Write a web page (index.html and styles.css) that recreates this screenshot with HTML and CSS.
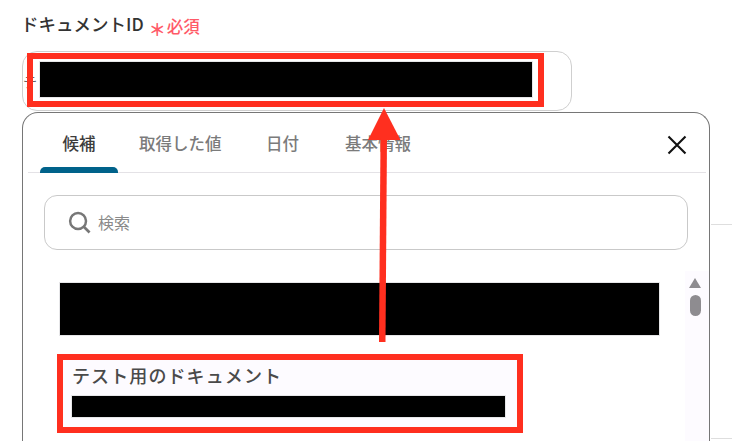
FILE: index.html
```html
<!DOCTYPE html>
<html lang="ja">
<head>
<meta charset="utf-8">
<title>ドキュメントID</title>
<link rel="stylesheet" href="styles.css">
</head>
<body>
<div class="page">
  <div class="field-label">
    <span class="label-text">ドキュメントID</span>
    <span class="required"><span class="asterisk">＊</span>必須</span>
  </div>
  <div class="id-input"><span class="input-value">テト</span></div>
  <div class="side-rule side-rule-top"></div>
  <div class="side-rule side-rule-bottom"></div>
  <section class="panel">
    <div class="tabs">
      <span class="tab tab-active">候補</span>
      <span class="tab tab-2">取得した値</span>
      <span class="tab tab-3">日付</span>
      <span class="tab tab-4">基本情報</span>
      <svg class="close" width="22" height="22" viewBox="0 0 22 22" aria-hidden="true"><path d="M2.5 2.5 19.5 19.5M19.5 2.5 2.5 19.5" stroke="#111" stroke-width="2.1" fill="none"/></svg>
    </div>
    <div class="search">
      <svg class="search-icon" width="23" height="23" viewBox="0 0 24 24" aria-hidden="true"><circle cx="10.5" cy="10.500" r="8.300" fill="none" stroke="#777" stroke-width="2.600"/><path d="M16.500 16.500 22.500 22.500" stroke="#777" stroke-width="2.800" fill="none"/></svg>
      <span class="search-text">検索</span>
    </div>
    <div class="list">
      <div class="option-first"><div class="redact redact-first"></div></div>
      <div class="option-hover">
        <div class="option-title">テスト用のドキュメント</div>
        <div class="redact redact-id"></div>
      </div>
    </div>
    <div class="scroll">
      <span class="scroll-up"></span>
      <span class="scroll-thumb"></span>
    </div>
  </section>
</div>
<div class="mark mark-input"></div>
<div class="redact-input"></div>
<div class="mark mark-option"></div>
<svg class="arrow" width="732" height="441" viewBox="0 0 732 441" aria-hidden="true">
  <path d="M384 108 400.500 140 368 140Z" fill="#ff2f1f"/>
  <path d="M380.500 138 387 138 385.500 342 379 342Z" fill="#ff2f1f"/>
</svg>
</body>
</html>
```

FILE: styles.css
```css
* { box-sizing: border-box; }
html, body { margin: 0; padding: 0; }
body {
  width: 732px;
  height: 441px;
  overflow: hidden;
  position: relative;
  background: #fff;
  font-family: "Noto Sans CJK JP", "Noto Sans", sans-serif;
}
.page { padding: 11px 22px 0; position: relative; height: 441px; overflow: hidden; }

.field-label { display: flex; align-items: center; height: 26px; color: #333; }
.label-text { font-size: 17.500px; font-weight: 500; line-height: 26px; margin-left: -1px; margin-top: -1px; white-space: nowrap; }
.required { display: flex; align-items: center; margin-left: 5px; color: #ff5a68; font-size: 16.500px; font-weight: 500; line-height: 26px; padding-top: 3px; }
.asterisk { font-size: 17px; line-height: 26px; width: 17px; height: 26px; padding-top: 3px; margin-right: 1px; font-weight: 700; }

.id-input {
  margin-top: 14px;
  width: 550px;
  height: 60px;
  border: 1px solid #cfcfcf;
  border-radius: 15px;
  background: #fff;
  padding: 16px 0 0 0;
  overflow: hidden;
  white-space: nowrap;
}
.input-value { font-size: 14px; line-height: 24px; color: #666; letter-spacing: -2px; display: inline-block; }

.side-rule { position: absolute; left: 711px; width: 21px; height: 1px; background: #dedede; }
.side-rule-top { top: 224px; }
.side-rule-bottom { top: 438px; }

.panel {
  margin-top: 1px;
  width: 688px;
  height: 329px;
  border: 1.5px solid #767676;
  border-bottom: 0;
  border-radius: 16px 16px 0 0;
  background: #fff;
  position: relative;
  overflow: hidden;
}
.tabs {
  position: relative;
  height: 60px;
  margin: 0 3px 0 5px;
  border-bottom: 1px solid #e4e2e6;
}
.tab {
  position: absolute;
  top: 18px;
  font-size: 16.500px;
  line-height: 24px;
  font-weight: 500;
  color: #7b7b7b;
  white-space: nowrap;
}
.tab-active { left: 12px; width: 78px; height: 42px; text-align: center; color: #3c3c3c; }
.tab-active::after {
  content: "";
  position: absolute;
  left: 0; right: 0; bottom: 0;
  height: 6px;
  background: #00628a;
  border-radius: 5px 5px 0 0;
}
.tab-2 { left: 111px; }
.tab-3 { left: 238px; }
.tab-4 { left: 317px; }
.close { position: absolute; left: 638px; top: 21px; }

.search {
  margin: 22px 21px 0 21px;
  height: 55px;
  border: 1px solid #c9c9c9;
  border-radius: 13px;
  display: flex;
  align-items: center;
  padding-left: 23px;
  padding-bottom: 1px;
  background: #fff;
}
.search-icon { margin-right: 7px; margin-top: 1px; }
.search-text { color: #8a8a8a; font-size: 16px; line-height: 24px; }

.list { padding: 33px 0 0 37px; }
.option-first { width: 600px; height: 71px; }
.redact { background: #000; outline: 1px solid #e6e6e8; }
.redact-first { width: 599px; height: 52px; }
.option-hover { width: 460px; height: 73px; background: #fdfbff; padding: 9px 0 0 12px; }
.option-title { font-size: 18px; font-weight: 500; line-height: 24px; color: #4a4a4a; letter-spacing: 1.100px; white-space: nowrap; }
.redact-id { width: 433px; height: 21px; margin-top: 9px; }

.scroll {
  position: absolute;
  left: 662px;
  top: 158px;
  width: 25px;
  height: 171px;
  background: #fdfbff;
  display: flex;
  flex-direction: column;
  align-items: center;
  padding: 7px 5px 0 0;
}
.scroll-up {
  width: 0; height: 0;
  border-left: 6.5px solid transparent;
  border-right: 6.5px solid transparent;
  border-bottom: 10px solid #8e8c90;
}
.scroll-thumb { width: 11px; height: 21px; border-radius: 6px; background: #8e8c90; margin-top: 7px; }

.mark { position: absolute; border: 6px solid #ff2f1f; }
.mark-input { left: 27px; top: 53px; width: 517px; height: 54px; }
.mark-option { left: 57px; top: 354px; width: 466px; height: 79px; }
.redact-input { position: absolute; left: 40px; top: 62px; width: 492px; height: 35px; background: #000; outline: 1px solid #e6e6e8; }
.arrow { position: absolute; left: 0; top: 0; pointer-events: none; }
```
